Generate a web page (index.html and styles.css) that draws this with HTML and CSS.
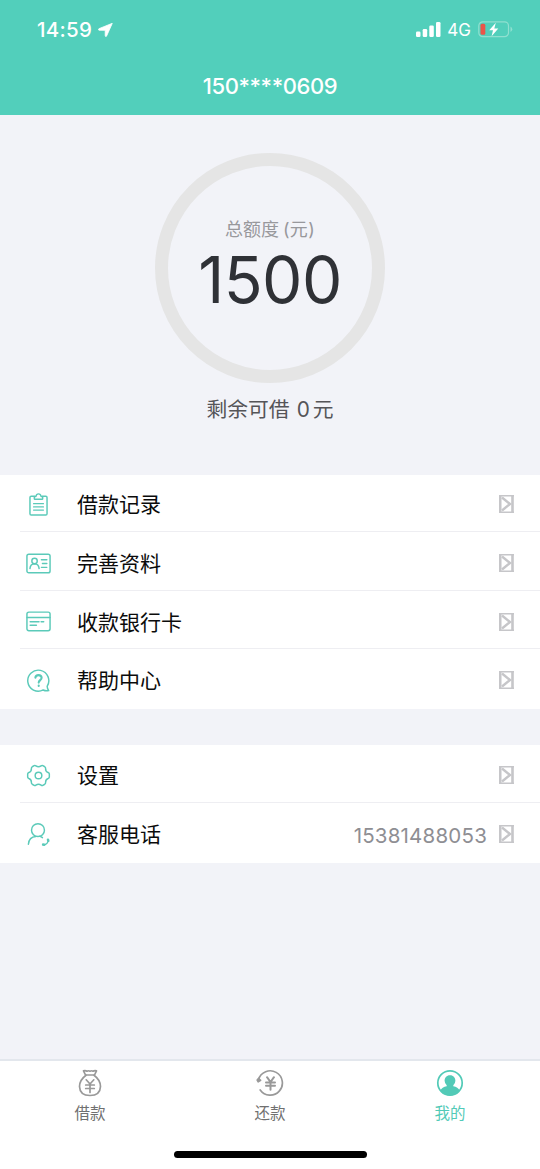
FILE: index.html
```html
<!DOCTYPE html>
<html lang="zh-CN">
<head>
<meta charset="utf-8">
<meta name="viewport" content="width=device-width, initial-scale=1">
<title>我的</title>
<link rel="stylesheet" href="styles.css">
</head>
<body>
<svg class="defs" width="0" height="0" aria-hidden="true">
  <symbol id="arrow" viewBox="0 0 15 18">
    <path d="M1.200 0V18M13.500 0V18" stroke-width="2.600"/>
    <path d="M0 .7H15M0 17.300H15" stroke-width="1.400"/>
    <path d="M3 2.500L11 9L3 15.500" stroke-width="2.400"/>
  </symbol>
</svg>
<div class="app">
  <header class="header">
    <div class="status">
      <div class="status-time">
        <span class="clock">14:59</span>
        <svg class="location" width="15" height="14" viewBox="0 0 15 14"><path d="M14.300 .3L8.500 13.200Q7.300 14 7.200 12.500V7.300L1 7.200Q-.4 6.600 .9 5.700Z" fill="#fff" stroke="#fff" stroke-width=".8" stroke-linejoin="round"/></svg>
      </div>
      <div class="status-right">
        <svg width="25" height="15" viewBox="0 0 25 15" fill="#fff"><rect x="0" y="9.500" width="4.500" height="5.500" rx="1.300"/><rect x="6.700" y="7" width="4.500" height="8" rx="1.300"/><rect x="13.300" y="3.500" width="4.500" height="11.500" rx="1.300"/><rect x="20" y="0" width="4.500" height="15" rx="1.300"/></svg>
        <span class="network">4G</span>
        <svg class="battery" width="35" height="17" viewBox="0 0 35 17"><rect x=".8" y=".8" width="29.700" height="14.900" rx="4" fill="none" stroke="#8fe0d0" stroke-width="1.200"/><path d="M32.500 5.500Q36 8.200 32.500 11Z" fill="#8fe0d0"/><rect x="2.500" y="2.800" width="4.800" height="11" rx="1.500" fill="#ea5449"/><path d="M17.800 1.800L11.200 9.300H15L13.600 15.200L20.300 7.500H16.300Z" fill="#fff"/></svg>
      </div>
    </div>
    <h1 class="title">150****0609</h1>
  </header>

  <main class="content">
    <section class="quota">
      <div class="ring">
        <div class="ring-label">总额度<span class="unit">(元)</span></div>
        <div class="ring-value">1500</div>
      </div>
      <div class="remaining">剩余可借<span class="remaining-num">0</span>元</div>
    </section>

    <nav class="menu menu-main">
      <a class="row">
        <svg class="row-icon" viewBox="0 0 24 24"><path d="M8 4H5Q3.800 4 3.800 5.200V20.800Q3.800 22 5 22H19Q20.200 22 20.200 20.800V5.200Q20.200 4 19 4H16"/><path d="M8 6.500V4.300H9.500Q10 1.800 12 1.800T14.500 4.300H16V6.500Q16 7 15.500 7H8.500Q8 7 8 6.500Z"/><path d="M7.200 11.200H16.800M7.200 14.300H16.800M7.200 17.400H16.800" class="fine"/></svg>
        <span class="row-label">借款记录</span><svg class="row-arrow"><use href="#arrow"/></svg>
      </a>
      <a class="row">
        <svg class="row-icon" viewBox="0 0 24 24"><rect x=".9" y="3.100" width="22.200" height="17.800" rx="1.800"/><circle cx="8.200" cy="9.600" r="2.600"/><path d="M3.800 16.900Q4.100 12.500 8.200 12.300Q12.200 12.500 12.600 16.900M14.800 8.300H20M15.800 12H20M14.800 15.700H20"/></svg>
        <span class="row-label">完善资料</span><svg class="row-arrow"><use href="#arrow"/></svg>
      </a>
      <a class="row">
        <svg class="row-icon" viewBox="0 0 24 24"><rect x=".9" y="3" width="22.200" height="17.800" rx="1.800"/><path d="M1 8.200H23M4 12.300H12.500M14.500 12.300H17M4 15.500H10"/></svg>
        <span class="row-label">收款银行卡</span><svg class="row-arrow"><use href="#arrow"/></svg>
      </a>
      <a class="row">
        <svg class="row-icon" viewBox="0 0 24 24"><path d="M16.500 21.100A10.100 10.100 0 1 1 20.300 17.600Q20.400 20 21.800 21.700Q18.800 22.300 16.500 21.100Z"/><path class="bold" d="M9 9.300Q9.200 6.800 12 6.800T15 9.400C15 11.600 12.200 11.700 12.200 14M12.200 16.800V17.200"/></svg>
        <span class="row-label">帮助中心</span><svg class="row-arrow"><use href="#arrow"/></svg>
      </a>
    </nav>

    <nav class="menu menu-more">
      <a class="row">
        <svg class="row-icon" viewBox="0 0 24 24"><path d="M9.500 2.800Q12 4.600 14.500 2.800Q15.300 2.200 16.200 2.600L18 3.600Q18.900 4.200 18.800 5.200Q18.700 8.200 21.200 9.100Q22.200 9.500 22.400 10.500V13.500Q22.200 14.500 21.200 14.900Q18.700 15.800 18.800 18.800Q18.900 19.800 18 20.400L16.200 21.400Q15.300 21.800 14.500 21.200Q12 19.400 9.500 21.200Q8.700 21.800 7.800 21.400L6 20.400Q5.100 19.800 5.200 18.800Q5.300 15.800 2.800 14.900Q1.800 14.500 1.600 13.500V10.500Q1.800 9.500 2.800 9.100Q5.300 8.200 5.200 5.200Q5.100 4.200 6 3.600L7.800 2.600Q8.700 2.200 9.500 2.800Z"/><circle cx="12" cy="12" r="3.200"/></svg>
        <span class="row-label">设置</span><svg class="row-arrow"><use href="#arrow"/></svg>
      </a>
      <a class="row">
        <svg class="row-icon" viewBox="0 0 24 24"><circle cx="11.500" cy="7.800" r="6.200"/><path d="M2.300 21.300Q2.900 14.300 9.500 13.900M13.200 13.700Q14.900 14.200 15.800 15"/><path class="phone" d="M21.300 17.500Q21.200 21.300 16.800 22"/><path class="dot" d="M21.100 17L21.400 18M16.400 21.700L17.500 21.900"/></svg>
        <span class="row-label">客服电话</span><span class="row-value">15381488053</span><svg class="row-arrow"><use href="#arrow"/></svg>
      </a>
    </nav>
  </main>

  <footer class="footer">
    <nav class="tabs">
      <a class="tab">
        <svg class="tab-icon" viewBox="0 0 28 28"><path d="M9.500 6L7.500 1.800Q9.500 1.200 11 2.200Q12.500 1.300 14 2.200Q15.500 1.300 17 2.200Q18.500 1.200 20.500 1.800L18.500 6Z"/><path d="M10 6.200Q3.500 11 3.500 17.500Q3.800 26.500 14 26.500T24.500 17.500Q24.500 11 18 6.200M10.200 10.800L14 15L17.800 10.800M14 15V23.500M9.700 16H18.300M9.700 19.500H18.300"/></svg>
        <span>借款</span>
      </a>
      <a class="tab">
        <svg class="tab-icon" viewBox="0 0 28 28"><path d="M2.500 10.500A12.200 12.200 0 1 1 4.200 21"/><path d="M1.200 11L2.200 12.800L4.600 11.300L2.500 9.500Z" fill="currentColor"/><path class="bold" d="M11 8.200L14.500 13L18 8.200M14.500 13V20.800M10 13.400H19M10 16.800H19"/></svg>
        <span>还款</span>
      </a>
      <a class="tab active">
        <svg class="tab-icon" viewBox="0 0 28 28"><circle cx="14" cy="14" r="12.200"/><path stroke="none" fill="currentColor" d="M14 6.300C17.500 6.300 19.400 8.800 19.400 11.800Q19.300 14.500 17.300 16.300V17.300Q22 18.200 23.700 21.500Q19.800 26.500 14 26.500T4.300 21.500Q6 18.200 10.700 17.300V16.300Q8.700 14.500 8.600 11.800C8.600 8.800 10.500 6.300 14 6.300Z"/></svg>
        <span>我的</span>
      </a>
    </nav>
    <div class="home-bar"></div>
  </footer>
</div>
</body>
</html>
```

FILE: styles.css
```css
* { box-sizing: border-box; }

body {
  margin: 0;
  background: #f2f3f8;
  color: #0b0b0b;
  font-family: Inter, "Noto Sans CJK SC", sans-serif;
}

.defs { display: block; }

.app {
  display: flex;
  flex-direction: column;
  width: 540px;
  height: 1169px;
  overflow: hidden;
}

.header {
  flex: none;
  height: 115px;
  background: #52cfbb;
  color: #fff;
}

.status {
  display: flex;
  justify-content: space-between;
  height: 59px;
  padding: 0 27px 0 37px;
  align-items: center;
}

.status-time, .status-right { display: flex; align-items: center; }
.clock { font-size: 20.500px; font-weight: 500; letter-spacing: .3px; }
.location { margin-left: 6px; }
.network { margin-left: 6px; font-size: 17px; line-height: 20px; }
.battery { margin-left: 7px; }

.title {
  margin: 12px 0 0;
  font-size: 22px;
  font-weight: 500;
  letter-spacing: -.4px;
  line-height: 30px;
  text-align: center;
}

.content { flex: 1; }

.quota {
  display: flex;
  flex-direction: column;
  align-items: center;
  height: 360px;
  padding-top: 38px;
}

.ring {
  width: 230px;
  height: 230px;
  padding-top: 51px;
  border: 13px solid #e5e5e5;
  border-radius: 50%;
  text-align: center;
}

.ring-label { font-size: 18px; line-height: 26px; color: #98989c; }
.unit { margin-left: 4px; letter-spacing: .3px; }
.ring-value {
  margin-top: -1px;
  font-size: 64px;
  line-height: 76px;
  letter-spacing: -.5px;
  color: #2f3136;
}
.remaining {
  margin-top: 12px;
  font-size: 20.800px;
  line-height: 30px;
  color: #555558;
}
.remaining-num { margin: 0 3px 0 7px; }

.menu { background: #fff; }
.menu-main { height: 234px; }
.menu-more { height: 118px; margin-top: 36px; padding-top: 1px; }

.row {
  display: flex;
  align-items: center;
  height: 58.700px;
  padding: 0 26px;
  background: linear-gradient(#eeeef2, #eeeef2) 20px 56px / 100% 1px no-repeat;
}
.row:last-child { background: none; }

.row-icon {
  flex: none;
  width: 25px;
  height: 25px;
  fill: none;
  stroke: #5bcab9;
  stroke-width: 1.400;
  stroke-linecap: round;
  stroke-linejoin: round;
}
.fine { stroke-width: 1.100; }
.bold { stroke-width: 2; }
.phone { stroke-width: 1.300; }
.dot { stroke-width: 2.400; }

.row-label { flex: 1; margin-left: 26px; padding-top: 2px; font-size: 21px; line-height: 30px; }
.row-value { margin-right: 12px; padding-top: 2px; font-size: 20.500px; letter-spacing: .2px; color: #8e8e93; }
.row-arrow { width: 15px; height: 18px; fill: none; stroke: #c6c6c9; }

.footer {
  flex: none;
  height: 110px;
  border-top: 2px solid #e3e7ed;
  background: #fff;
}
.tabs { display: flex; height: 93px; padding-top: 8px; }
.tab {
  display: flex;
  flex: 1;
  flex-direction: column;
  align-items: center;
  font-size: 15.500px;
  line-height: 24px;
  color: #707070;
}
.tab-icon {
  width: 28px;
  height: 28px;
  margin-bottom: 5px;
  color: #999;
  fill: none;
  stroke: currentColor;
  stroke-width: 1.700;
  stroke-linecap: round;
  stroke-linejoin: round;
}
.active, .active .tab-icon { color: #52cab7; }
.home-bar {
  width: 193px;
  height: 7px;
  margin: -3px auto 0;
  border-radius: 4px;
  background: #000;
}
```
